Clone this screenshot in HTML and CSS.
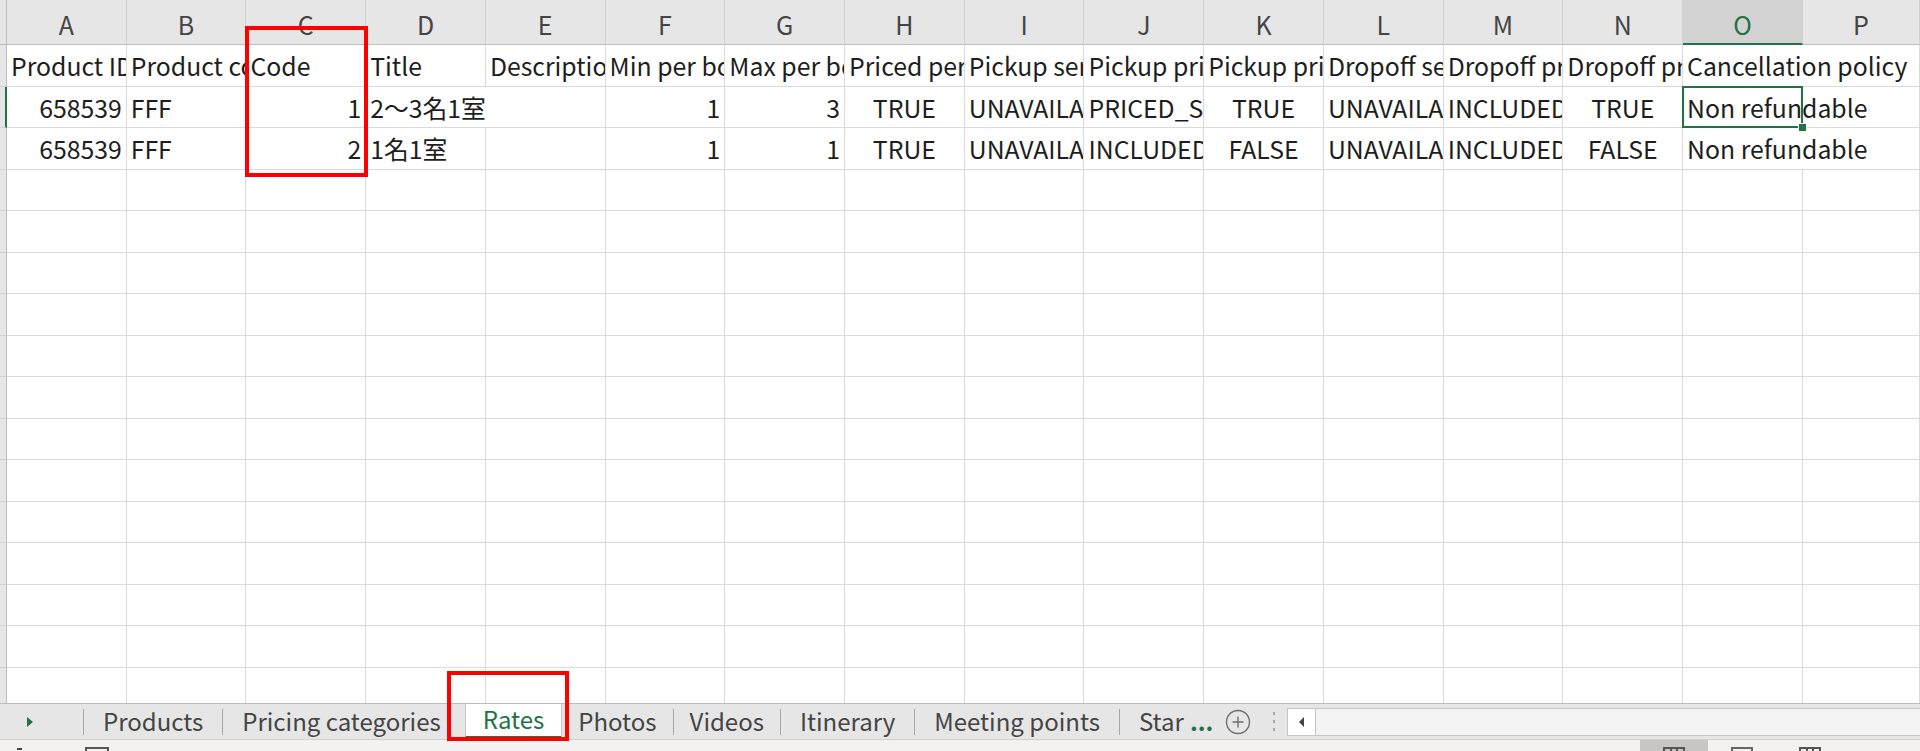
FILE: index.html
```html
<!DOCTYPE html>
<html lang="ja">
<head>
<meta charset="utf-8">
<title>Rates</title>
<link rel="stylesheet" href="styles.css">
</head>
<body>
<div class="app">
  <div class="sheet">
    <div class="corner"></div>
    <div class="ch">A</div><div class="ch">B</div><div class="ch">C</div><div class="ch">D</div><div class="ch">E</div><div class="ch">F</div><div class="ch">G</div><div class="ch">H</div><div class="ch">I</div><div class="ch">J</div><div class="ch">K</div><div class="ch">L</div><div class="ch">M</div><div class="ch">N</div><div class="ch ch-sel">O</div><div class="ch">P</div>

    <div class="rh"></div>
    <div class="c">Product ID</div><div class="c">Product code</div><div class="c">Code</div><div class="c">Title</div><div class="c">Description</div><div class="c">Min per booking</div><div class="c">Max per booking</div><div class="c">Priced per person</div><div class="c">Pickup service</div><div class="c">Pickup price type</div><div class="c">Pickup priced</div><div class="c">Dropoff service</div><div class="c">Dropoff price type</div><div class="c">Dropoff priced</div><div class="c span2">Cancellation policy</div>

    <div class="rh rh-sel"></div>
    <div class="c num">658539</div><div class="c">FFF</div><div class="c num">1</div><div class="c span2">2～3名1室</div><div class="c num">1</div><div class="c num">3</div><div class="c ctr">TRUE</div><div class="c">UNAVAILABLE</div><div class="c">PRICED_SEPARATELY</div><div class="c ctr">TRUE</div><div class="c">UNAVAILABLE</div><div class="c">INCLUDED</div><div class="c ctr">TRUE</div><div class="c span2 active">Non refundable</div>

    <div class="rh"></div>
    <div class="c num">658539</div><div class="c">FFF</div><div class="c num">2</div><div class="c">1名1室</div><div class="c"></div><div class="c num">1</div><div class="c num">1</div><div class="c ctr">TRUE</div><div class="c">UNAVAILABLE</div><div class="c">INCLUDED</div><div class="c ctr">FALSE</div><div class="c">UNAVAILABLE</div><div class="c">INCLUDED</div><div class="c ctr">FALSE</div><div class="c span2">Non refundable</div>

    <div class="rh"></div><div class="c"></div><div class="c"></div><div class="c"></div><div class="c"></div><div class="c"></div><div class="c"></div><div class="c"></div><div class="c"></div><div class="c"></div><div class="c"></div><div class="c"></div><div class="c"></div><div class="c"></div><div class="c"></div><div class="c"></div><div class="c"></div>
    <div class="rh"></div><div class="c"></div><div class="c"></div><div class="c"></div><div class="c"></div><div class="c"></div><div class="c"></div><div class="c"></div><div class="c"></div><div class="c"></div><div class="c"></div><div class="c"></div><div class="c"></div><div class="c"></div><div class="c"></div><div class="c"></div><div class="c"></div>
    <div class="rh"></div><div class="c"></div><div class="c"></div><div class="c"></div><div class="c"></div><div class="c"></div><div class="c"></div><div class="c"></div><div class="c"></div><div class="c"></div><div class="c"></div><div class="c"></div><div class="c"></div><div class="c"></div><div class="c"></div><div class="c"></div><div class="c"></div>
    <div class="rh"></div><div class="c"></div><div class="c"></div><div class="c"></div><div class="c"></div><div class="c"></div><div class="c"></div><div class="c"></div><div class="c"></div><div class="c"></div><div class="c"></div><div class="c"></div><div class="c"></div><div class="c"></div><div class="c"></div><div class="c"></div><div class="c"></div>
    <div class="rh"></div><div class="c"></div><div class="c"></div><div class="c"></div><div class="c"></div><div class="c"></div><div class="c"></div><div class="c"></div><div class="c"></div><div class="c"></div><div class="c"></div><div class="c"></div><div class="c"></div><div class="c"></div><div class="c"></div><div class="c"></div><div class="c"></div>
    <div class="rh"></div><div class="c"></div><div class="c"></div><div class="c"></div><div class="c"></div><div class="c"></div><div class="c"></div><div class="c"></div><div class="c"></div><div class="c"></div><div class="c"></div><div class="c"></div><div class="c"></div><div class="c"></div><div class="c"></div><div class="c"></div><div class="c"></div>
    <div class="rh"></div><div class="c"></div><div class="c"></div><div class="c"></div><div class="c"></div><div class="c"></div><div class="c"></div><div class="c"></div><div class="c"></div><div class="c"></div><div class="c"></div><div class="c"></div><div class="c"></div><div class="c"></div><div class="c"></div><div class="c"></div><div class="c"></div>
    <div class="rh"></div><div class="c"></div><div class="c"></div><div class="c"></div><div class="c"></div><div class="c"></div><div class="c"></div><div class="c"></div><div class="c"></div><div class="c"></div><div class="c"></div><div class="c"></div><div class="c"></div><div class="c"></div><div class="c"></div><div class="c"></div><div class="c"></div>
    <div class="rh"></div><div class="c"></div><div class="c"></div><div class="c"></div><div class="c"></div><div class="c"></div><div class="c"></div><div class="c"></div><div class="c"></div><div class="c"></div><div class="c"></div><div class="c"></div><div class="c"></div><div class="c"></div><div class="c"></div><div class="c"></div><div class="c"></div>
    <div class="rh"></div><div class="c"></div><div class="c"></div><div class="c"></div><div class="c"></div><div class="c"></div><div class="c"></div><div class="c"></div><div class="c"></div><div class="c"></div><div class="c"></div><div class="c"></div><div class="c"></div><div class="c"></div><div class="c"></div><div class="c"></div><div class="c"></div>
    <div class="rh"></div><div class="c"></div><div class="c"></div><div class="c"></div><div class="c"></div><div class="c"></div><div class="c"></div><div class="c"></div><div class="c"></div><div class="c"></div><div class="c"></div><div class="c"></div><div class="c"></div><div class="c"></div><div class="c"></div><div class="c"></div><div class="c"></div>
    <div class="rh"></div><div class="c"></div><div class="c"></div><div class="c"></div><div class="c"></div><div class="c"></div><div class="c"></div><div class="c"></div><div class="c"></div><div class="c"></div><div class="c"></div><div class="c"></div><div class="c"></div><div class="c"></div><div class="c"></div><div class="c"></div><div class="c"></div>
    <div class="rh"></div><div class="c"></div><div class="c"></div><div class="c"></div><div class="c"></div><div class="c"></div><div class="c"></div><div class="c"></div><div class="c"></div><div class="c"></div><div class="c"></div><div class="c"></div><div class="c"></div><div class="c"></div><div class="c"></div><div class="c"></div><div class="c"></div>
    <div class="rh"></div><div class="c"></div><div class="c"></div><div class="c"></div><div class="c"></div><div class="c"></div><div class="c"></div><div class="c"></div><div class="c"></div><div class="c"></div><div class="c"></div><div class="c"></div><div class="c"></div><div class="c"></div><div class="c"></div><div class="c"></div><div class="c"></div>
  </div>

  <div class="tabbar">
    <div class="nav"><span class="tri-right"></span></div>
    <span class="sep"></span>
    <div class="tab">Products</div>
    <span class="sep"></span>
    <div class="tab">Pricing categories</div>
    <div class="tab tab-active">Rates</div>
    <div class="tab tab-tight">Photos</div>
    <span class="sep"></span>
    <div class="tab tab-tight">Videos</div>
    <span class="sep"></span>
    <div class="tab">Itinerary</div>
    <span class="sep"></span>
    <div class="tab">Meeting points</div>
    <span class="sep"></span>
    <div class="tab tab-more">Star <span class="ellipsis">...</span></div>
    <div class="addsheet">
      <svg width="26" height="26" viewBox="0 0 26 26"><circle cx="13" cy="13" r="11.5" fill="none" stroke="#6e6e6e" stroke-width="1.4"/><path d="M13 7.5v11M7.5 13h11" stroke="#6e6e6e" stroke-width="1.4"/></svg>
    </div>
    <div class="vdots"><i></i><i></i><i></i></div>
    <div class="hscroll">
      <div class="hs-btn"><span class="tri-left"></span></div>
      <div class="hs-track"></div>
    </div>
  </div>

  <div class="statusbar">
    <span class="sb-dash"></span>
    <span class="sb-box"></span>
    <div class="views">
      <div class="view view-on"><span class="vi vi-grid"></span></div>
      <div class="view"><span class="vi vi-page"></span></div>
      <div class="view"><span class="vi vi-grid"></span></div>
    </div>
  </div>

  <div class="mark mark-col"></div>
  <div class="mark mark-tab"></div>
</div>
</body>
</html>
```

FILE: styles.css
```css
html, body {
  margin: 0;
  padding: 0;
  background: #ffffff;
  overflow: hidden;
}

.app {
  position: relative;
  width: 1920px;
  height: 751px;
  font-family: "Noto Sans CJK JP", "Noto Sans", sans-serif;
  color: #1e1e1e;
}

/* ---------- sheet grid ---------- */
.sheet {
  display: grid;
  grid-template-columns: 7px repeat(15, 119.73px) 1fr;
  grid-template-rows: 45px;
  grid-auto-rows: 41.5px;
  height: 703px;
  overflow: hidden;
  background: #ffffff;
}

.corner {
  background: #e6e6e6;
  border-right: 1px solid #bdbdbd;
  border-bottom: 1px solid #bdbdbd;
  box-sizing: border-box;
}

.ch {
  background: #e6e6e6;
  border-right: 1px solid #d2d2d2;
  border-bottom: 1px solid #bdbdbd;
  box-sizing: border-box;
  display: flex;
  align-items: center;
  justify-content: center;
  font-size: 25px;
  color: #444444;
  padding-top: 4px;
}

.ch-sel {
  background: #d2d2d2;
  color: #217346;
  border-bottom: 2px solid #217346;
}

.rh {
  background: #e6e6e6;
  border-right: 1px solid #bdbdbd;
  border-bottom: 1px solid #d2d2d2;
  box-sizing: border-box;
}

.rh-sel {
  border-right: 2px solid #217346;
}

.c {
  border-right: 1px solid #dadada;
  border-bottom: 1px solid #dadada;
  box-sizing: border-box;
  font-size: 24.8px;
  line-height: 40px;
  white-space: nowrap;
  overflow: hidden;
  padding: 0 4px 0 4px;
  color: #1e1e1e;
}

.num { text-align: right; }
.ctr { text-align: center; }
.span2 { grid-column: span 2; }

.active {
  position: relative;
  overflow: visible;
}

.active::after {
  content: "";
  position: absolute;
  left: -1px;
  top: -1px;
  width: 121px;
  height: 42px;
  border: 2px solid #217346;
  box-sizing: border-box;
}

.active::before {
  content: "";
  position: absolute;
  left: 115px;
  top: 36px;
  width: 7px;
  height: 7px;
  background: #217346;
  border: 1px solid #ffffff;
  z-index: 2;
}

/* ---------- sheet tabs ---------- */
.tabbar {
  display: flex;
  align-items: stretch;
  height: 37px;
  box-sizing: border-box;
  background: #e6e6e6;
  border-top: 1px solid #bcbcbc;
  border-bottom: 1px solid #d0d0d0;
  font-size: 24px;
  color: #444444;
}

.nav {
  width: 83px;
  display: flex;
  align-items: center;
  padding-left: 27px;
  box-sizing: border-box;
}

.tri-right {
  width: 0;
  height: 0;
  border-left: 6px solid #217346;
  border-top: 5px solid transparent;
  border-bottom: 5px solid transparent;
}

.sep {
  width: 1px;
  align-self: center;
  height: 26px;
  background: #a8a8a8;
}

.tab {
  display: flex;
  align-items: center;
  padding: 0 19px 3px;
  white-space: nowrap;
}

.tab-tight {
  padding: 0 16px 3px;
}

.tab-active {
  background: #ffffff;
  color: #217346;
  margin-left: 5px;
  padding: 0 17px 3px;
  border-left: 1px solid #c6c6c6;
  border-right: 1px solid #c6c6c6;
  border-bottom: 2px solid #217346;
  margin-bottom: 1px;
}

.tab-more {
  padding-right: 12px;
}

.ellipsis {
  color: #217346;
  margin-left: 6px;
  font-weight: bold;
}

.addsheet {
  display: flex;
  align-items: center;
  padding: 0 8px 0 0;
}

.vdots {
  display: flex;
  flex-direction: column;
  justify-content: center;
  gap: 5px;
  padding: 0 12px 0 14px;
}

.vdots i {
  display: block;
  width: 2px;
  height: 3px;
  background: #a6a6a6;
}

.hscroll {
  flex: 1;
  display: flex;
  align-self: center;
  height: 28px;
  margin-top: 1px;
  border: 1px solid #c6c6c6;
  border-right: none;
  background: #f3f3f3;
  box-sizing: border-box;
}

.hs-btn {
  width: 27px;
  background: #ffffff;
  border-right: 1px solid #c6c6c6;
  display: flex;
  align-items: center;
  justify-content: center;
}

.tri-left {
  width: 0;
  height: 0;
  border-right: 5px solid #444444;
  border-top: 5px solid transparent;
  border-bottom: 5px solid transparent;
}

.hs-track {
  flex: 1;
}

/* ---------- status bar ---------- */
.statusbar {
  display: flex;
  align-items: flex-start;
  height: 11px;
  background: #f3f2f1;
  overflow: hidden;
  position: relative;
}

.sb-dash {
  margin: 8px 0 0 17px;
  width: 5px;
  height: 2px;
  background: #444444;
}

.sb-box {
  margin: 7px 0 0 63px;
  width: 24px;
  height: 10px;
  border: 2px solid #555555;
  box-sizing: border-box;
}

.views {
  margin-left: auto;
  margin-right: 76px;
  display: flex;
  height: 11px;
}

.view {
  width: 68px;
  display: flex;
  justify-content: center;
}

.view-on {
  background: #c8c6c4;
}

.vi {
  margin-top: 7px;
  width: 22px;
  height: 10px;
  border: 2px solid #555555;
  box-sizing: border-box;
}

.vi-grid {
  background: linear-gradient(90deg, transparent 5px, #555 5px, #555 7px, transparent 7px, transparent 11px, #555 11px, #555 13px, transparent 13px);
}

.vi-page {
  border-color: #666666;
}

/* ---------- red annotation boxes ---------- */
.mark {
  position: absolute;
  border: 4px solid #ff0000;
  box-sizing: border-box;
  pointer-events: none;
}

.mark-col {
  left: 245px;
  top: 26px;
  width: 123px;
  height: 151px;
}

.mark-tab {
  left: 447px;
  top: 671px;
  width: 122px;
  height: 70px;
}
```
